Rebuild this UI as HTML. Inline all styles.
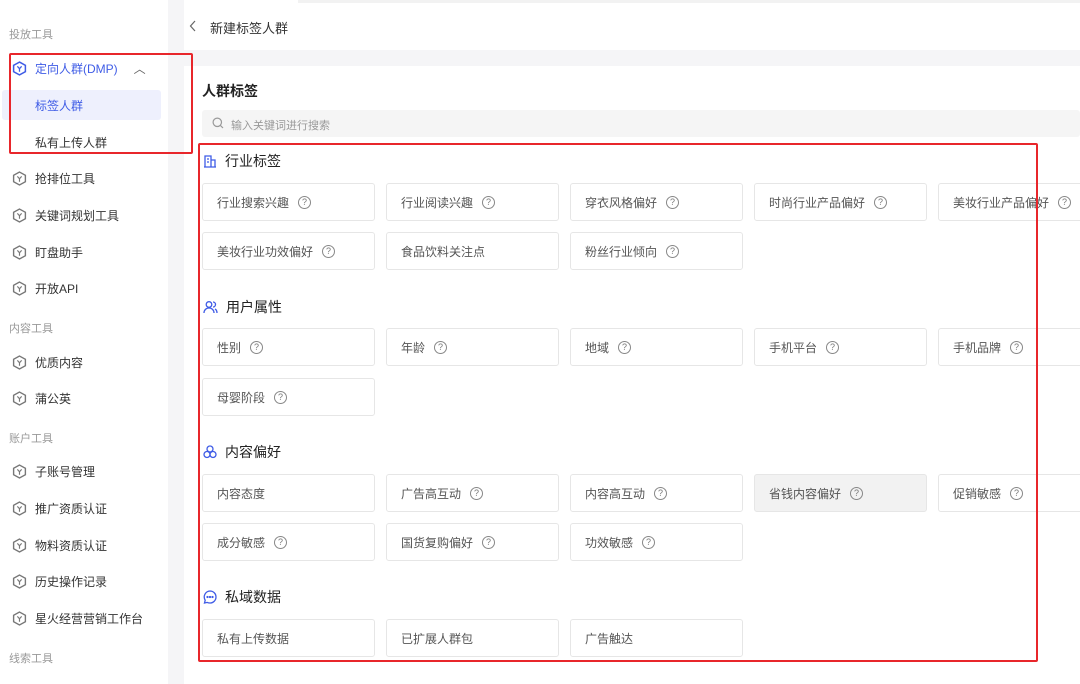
<!DOCTYPE html>
<html><head><meta charset="utf-8"><style>
*{margin:0;padding:0;box-sizing:border-box}
body{width:1080px;height:684px;overflow:hidden;background:#fff;font-family:"Liberation Sans","Noto Sans CJK SC",sans-serif;position:relative;color:#333}
.a{position:absolute}
.grp{font-size:11px;color:#999;left:9px}
.it{left:12px;font-size:12px;color:#333;display:flex;align-items:center;height:20px}
.it svg{margin-right:8px}
.card{position:absolute;width:173px;height:38px;border:1px solid #e6e6e6;border-radius:3px;font-size:12px;color:#555;display:flex;align-items:center;padding-left:14px;background:#fff}
.q{display:inline-block;width:13px;height:13px;border:1px solid #888;border-radius:50%;font-size:9px;line-height:11px;text-align:center;color:#777;margin-left:9px}
.sec{position:absolute;left:203px;font-size:14px;color:#222;display:flex;align-items:center}
.sec svg{margin-right:8px}
</style></head><body>
<div class="a" style="left:168px;top:0;width:16px;height:684px;background:#f5f5f7"></div>
<div class="a" style="left:298px;top:0;width:782px;height:3px;background:#f2f2f2"></div>
<div class="a" style="left:184px;top:50px;width:896px;height:16px;background:#f5f5f7"></div>

<div class="a grp" style="top:26px">投放工具</div>
<div class="a" style="left:2px;top:90px;width:159px;height:30px;background:#eef0fd;border-radius:3px"></div>
<div class="a it" style="top:58px;color:#3f5ce6"><svg width="15" height="15" viewBox="0 0 14 14"><path d="M7 1L12.5 4v6L7 13 1.5 10V4z" fill="none" stroke="#3f5ce6" stroke-width="1.4"/><path d="M5 5l2 2.2 2-2.2M7 7.2V10" fill="none" stroke="#3f5ce6" stroke-width="1.2"/></svg>定向人群(DMP)<span style="margin-left:16px;color:#666">︿</span></div>
<div class="a" style="left:35px;top:97px;font-size:12px;color:#3f5ce6">标签人群</div>
<div class="a" style="left:35px;top:134px;font-size:12px;color:#333">私有上传人群</div>
<div class="a" style="left:9px;top:53px;width:184px;height:101px;border:2px solid #e8262b;border-radius:2px"></div>

<div class="a it" style="top:168px"><svg width="15" height="15" viewBox="0 0 14 14"><path d="M7 1L12.5 4v6L7 13 1.5 10V4z" fill="none" stroke="#777" stroke-width="1.3"/><path d="M5 5l2 2.2 2-2.2M7 7.2V10" fill="none" stroke="#777" stroke-width="1.1"/></svg>抢排位工具</div>
<div class="a it" style="top:205px"><svg width="15" height="15" viewBox="0 0 14 14"><path d="M7 1L12.5 4v6L7 13 1.5 10V4z" fill="none" stroke="#777" stroke-width="1.3"/><path d="M5 5l2 2.2 2-2.2M7 7.2V10" fill="none" stroke="#777" stroke-width="1.1"/></svg>关键词规划工具</div>
<div class="a it" style="top:242px"><svg width="15" height="15" viewBox="0 0 14 14"><path d="M7 1L12.5 4v6L7 13 1.5 10V4z" fill="none" stroke="#777" stroke-width="1.3"/><path d="M5 5l2 2.2 2-2.2M7 7.2V10" fill="none" stroke="#777" stroke-width="1.1"/></svg>盯盘助手</div>
<div class="a it" style="top:278px"><svg width="15" height="15" viewBox="0 0 14 14"><path d="M7 1L12.5 4v6L7 13 1.5 10V4z" fill="none" stroke="#777" stroke-width="1.3"/><path d="M5 5l2 2.2 2-2.2M7 7.2V10" fill="none" stroke="#777" stroke-width="1.1"/></svg>开放API</div>
<div class="a grp" style="top:320px">内容工具</div>
<div class="a it" style="top:352px"><svg width="15" height="15" viewBox="0 0 14 14"><path d="M7 1L12.5 4v6L7 13 1.5 10V4z" fill="none" stroke="#777" stroke-width="1.3"/><path d="M5 5l2 2.2 2-2.2M7 7.2V10" fill="none" stroke="#777" stroke-width="1.1"/></svg>优质内容</div>
<div class="a it" style="top:388px"><svg width="15" height="15" viewBox="0 0 14 14"><path d="M7 1L12.5 4v6L7 13 1.5 10V4z" fill="none" stroke="#777" stroke-width="1.3"/><path d="M5 5l2 2.2 2-2.2M7 7.2V10" fill="none" stroke="#777" stroke-width="1.1"/></svg>蒲公英</div>
<div class="a grp" style="top:430px">账户工具</div>
<div class="a it" style="top:461px"><svg width="15" height="15" viewBox="0 0 14 14"><path d="M7 1L12.5 4v6L7 13 1.5 10V4z" fill="none" stroke="#777" stroke-width="1.3"/><path d="M5 5l2 2.2 2-2.2M7 7.2V10" fill="none" stroke="#777" stroke-width="1.1"/></svg>子账号管理</div>
<div class="a it" style="top:498px"><svg width="15" height="15" viewBox="0 0 14 14"><path d="M7 1L12.5 4v6L7 13 1.5 10V4z" fill="none" stroke="#777" stroke-width="1.3"/><path d="M5 5l2 2.2 2-2.2M7 7.2V10" fill="none" stroke="#777" stroke-width="1.1"/></svg>推广资质认证</div>
<div class="a it" style="top:535px"><svg width="15" height="15" viewBox="0 0 14 14"><path d="M7 1L12.5 4v6L7 13 1.5 10V4z" fill="none" stroke="#777" stroke-width="1.3"/><path d="M5 5l2 2.2 2-2.2M7 7.2V10" fill="none" stroke="#777" stroke-width="1.1"/></svg>物料资质认证</div>
<div class="a it" style="top:571px"><svg width="15" height="15" viewBox="0 0 14 14"><path d="M7 1L12.5 4v6L7 13 1.5 10V4z" fill="none" stroke="#777" stroke-width="1.3"/><path d="M5 5l2 2.2 2-2.2M7 7.2V10" fill="none" stroke="#777" stroke-width="1.1"/></svg>历史操作记录</div>
<div class="a it" style="top:608px"><svg width="15" height="15" viewBox="0 0 14 14"><path d="M7 1L12.5 4v6L7 13 1.5 10V4z" fill="none" stroke="#777" stroke-width="1.3"/><path d="M5 5l2 2.2 2-2.2M7 7.2V10" fill="none" stroke="#777" stroke-width="1.1"/></svg>星火经营营销工作台</div>
<div class="a grp" style="top:650px">线索工具</div>

<svg class="a" style="left:189px;top:20px" width="8" height="12" viewBox="0 0 8 12"><path d="M6 1L1.5 6 6 11" fill="none" stroke="#666" stroke-width="1.2"/></svg>
<div class="a" style="left:210px;top:18px;font-size:13px;color:#333">新建标签人群</div>
<div class="a" style="left:202px;top:81px;font-size:14px;font-weight:bold;color:#222">人群标签</div>
<div class="a" style="left:202px;top:110px;width:878px;height:27px;background:#f5f5f5;border-radius:3px"></div>
<svg class="a" style="left:212px;top:117px" width="12" height="12" viewBox="0 0 12 12"><circle cx="5.3" cy="5.3" r="4.2" fill="none" stroke="#999" stroke-width="1.2"/><path d="M8.4 8.4l2.6 2.6" stroke="#999" stroke-width="1.2"/></svg>
<div class="a" style="left:231px;top:117px;font-size:11px;color:#999">输入关键词进行搜索</div>

<div class="sec" style="top:151px"><svg width="14" height="14" viewBox="0 0 14 14" fill="none" stroke="#3f5ce6" stroke-width="1.3"><path d="M2 13V2h6v11M8 6h4v7M1 13h12M4 5h2M4 8h2"/></svg>行业标签</div>
<div class="sec" style="top:297px"><svg width="15" height="14" viewBox="0 0 15 14" fill="none" stroke="#3f5ce6" stroke-width="1.3"><circle cx="6" cy="4.5" r="2.8"/><path d="M1 13c0-3 2.2-5 5-5s5 2 5 5M10 2a2.5 2.5 0 010 5M12 9c1.3.7 2 2 2 4"/></svg>用户属性</div>
<div class="sec" style="top:442px"><svg width="14" height="14" viewBox="0 0 14 14" fill="none" stroke="#3f5ce6" stroke-width="1.3"><circle cx="7" cy="4" r="3"/><circle cx="4" cy="9.5" r="3"/><circle cx="10" cy="9.5" r="3"/></svg>内容偏好</div>
<div class="sec" style="top:587px"><svg width="14" height="14" viewBox="0 0 14 14" fill="none" stroke="#3f5ce6" stroke-width="1.3"><path d="M7 1a6 6 0 110 12c-1 0-2-.2-2.8-.6L1.5 13l.7-2.8A6 6 0 017 1z"/><circle cx="4.5" cy="7" r=".5" fill="#3f5ce6"/><circle cx="7" cy="7" r=".5" fill="#3f5ce6"/><circle cx="9.5" cy="7" r=".5" fill="#3f5ce6"/></svg>私域数据</div>

<div class="card" style="left:202px;top:183px">行业搜索兴趣<span class="q">?</span></div>
<div class="card" style="left:386px;top:183px">行业阅读兴趣<span class="q">?</span></div>
<div class="card" style="left:570px;top:183px">穿衣风格偏好<span class="q">?</span></div>
<div class="card" style="left:754px;top:183px">时尚行业产品偏好<span class="q">?</span></div>
<div class="card" style="left:938px;top:183px">美妆行业产品偏好<span class="q">?</span></div>
<div class="card" style="left:202px;top:232px">美妆行业功效偏好<span class="q">?</span></div>
<div class="card" style="left:386px;top:232px">食品饮料关注点</div>
<div class="card" style="left:570px;top:232px">粉丝行业倾向<span class="q">?</span></div>

<div class="card" style="left:202px;top:328px">性别<span class="q">?</span></div>
<div class="card" style="left:386px;top:328px">年龄<span class="q">?</span></div>
<div class="card" style="left:570px;top:328px">地域<span class="q">?</span></div>
<div class="card" style="left:754px;top:328px">手机平台<span class="q">?</span></div>
<div class="card" style="left:938px;top:328px">手机品牌<span class="q">?</span></div>
<div class="card" style="left:202px;top:378px">母婴阶段<span class="q">?</span></div>

<div class="card" style="left:202px;top:474px">内容态度</div>
<div class="card" style="left:386px;top:474px">广告高互动<span class="q">?</span></div>
<div class="card" style="left:570px;top:474px">内容高互动<span class="q">?</span></div>
<div class="card" style="left:754px;top:474px;background:#f2f2f2">省钱内容偏好<span class="q">?</span></div>
<div class="card" style="left:938px;top:474px">促销敏感<span class="q">?</span></div>
<div class="card" style="left:202px;top:523px">成分敏感<span class="q">?</span></div>
<div class="card" style="left:386px;top:523px">国货复购偏好<span class="q">?</span></div>
<div class="card" style="left:570px;top:523px">功效敏感<span class="q">?</span></div>

<div class="card" style="left:202px;top:619px">私有上传数据</div>
<div class="card" style="left:386px;top:619px">已扩展人群包</div>
<div class="card" style="left:570px;top:619px">广告触达</div>

<div class="a" style="left:198px;top:143px;width:840px;height:519px;border:2px solid #e8262b;border-radius:2px"></div>
</body></html>
